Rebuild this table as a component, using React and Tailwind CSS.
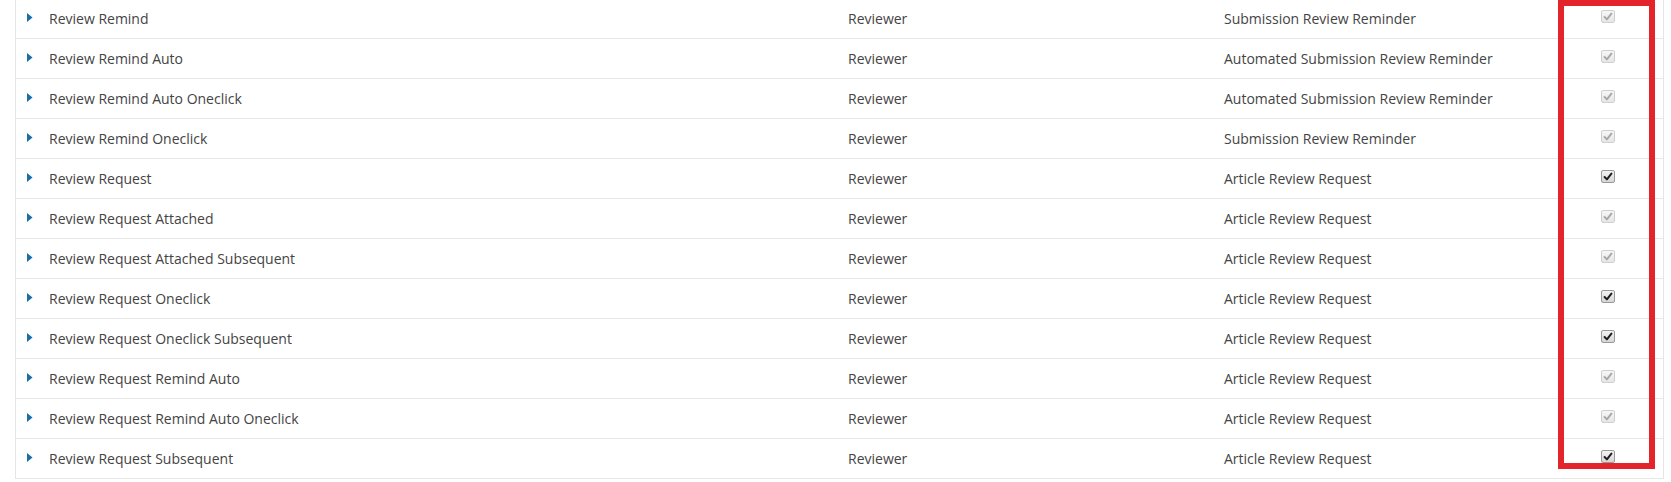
import React from "react";

const rows = [
  { name: "Review Remind", role: "Reviewer", subject: "Submission Review Reminder", enabled: false },
  { name: "Review Remind Auto", role: "Reviewer", subject: "Automated Submission Review Reminder", enabled: false },
  { name: "Review Remind Auto Oneclick", role: "Reviewer", subject: "Automated Submission Review Reminder", enabled: false },
  { name: "Review Remind Oneclick", role: "Reviewer", subject: "Submission Review Reminder", enabled: false },
  { name: "Review Request", role: "Reviewer", subject: "Article Review Request", enabled: true },
  { name: "Review Request Attached", role: "Reviewer", subject: "Article Review Request", enabled: false },
  { name: "Review Request Attached Subsequent", role: "Reviewer", subject: "Article Review Request", enabled: false },
  { name: "Review Request Oneclick", role: "Reviewer", subject: "Article Review Request", enabled: true },
  { name: "Review Request Oneclick Subsequent", role: "Reviewer", subject: "Article Review Request", enabled: true },
  { name: "Review Request Remind Auto", role: "Reviewer", subject: "Article Review Request", enabled: false },
  { name: "Review Request Remind Auto Oneclick", role: "Reviewer", subject: "Article Review Request", enabled: false },
  { name: "Review Request Subsequent", role: "Reviewer", subject: "Article Review Request", enabled: true },
];

const CheckBox = ({ enabled }) => (
  <div
    className={
      enabled
        ? "w-[14px] h-[13px] rounded-[2px] border border-[#9a9a9a] bg-gradient-to-b from-[#f4f4f4] to-[#d6d6d6] flex items-center justify-center"
        : "w-[14px] h-[13px] rounded-[2px] border border-[#cfcfcf] bg-gradient-to-b from-[#f7f7f7] to-[#e6e6e6] flex items-center justify-center"
    }
  >
    <svg width="10" height="9" viewBox="0 0 10 10">
      <path
        d="M1.2 5.6 L3.8 8.2 L8.8 1.8"
        fill="none"
        stroke={enabled ? "#1e1e1e" : "#a9a9a9"}
        strokeWidth="2.2"
        strokeLinecap="round"
        strokeLinejoin="round"
      />
    </svg>
  </div>
);

export default function App() {
  return (
    <div className="relative w-[1671px] h-[482px] bg-white overflow-hidden" style={{ fontFamily: '"Open Sans", "Noto Sans", sans-serif' }}>
      <div className="ml-[15px] mt-[-1px] w-[1649px] border-x border-[#e5e5e5] text-[14px] text-[#444]">
        {rows.map((row) => (
          <div key={row.name} className="flex h-[40px] items-center border-b border-[#e8e8e8]">
            <div className="w-[832px] flex items-center pl-[11px]">
              <svg width="6" height="9" viewBox="0 0 6 9" className="mr-[16px] mt-[-2px]">
                <path d="M0 0 L5.5 4.5 L0 9 Z" fill="#1a6ea6" />
              </svg>
              <span>{row.name}</span>
            </div>
            <div className="w-[376px]">{row.role}</div>
            <div className="w-[377px]">{row.subject}</div>
            <div className="self-start pt-[11px]">
              <CheckBox enabled={row.enabled} />
            </div>
          </div>
        ))}
      </div>
      {/* red annotation box */}
      <div className="absolute left-[1558px] top-[0px] w-[97px] h-[469px] border-[6px] border-[#e3242b]" />
    </div>
  );
}
